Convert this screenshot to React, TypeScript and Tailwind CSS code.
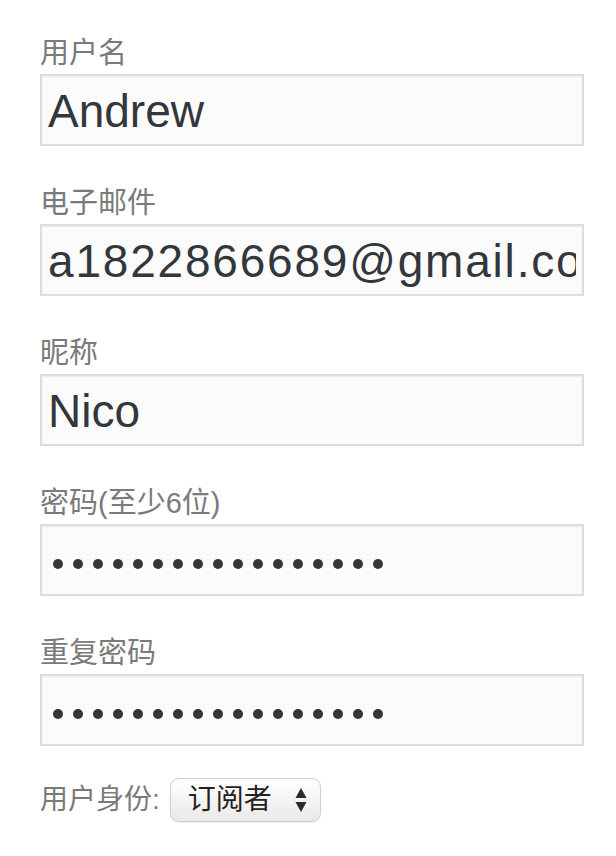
const font = { fontFamily: '"Liberation Sans", "Noto Sans CJK SC", sans-serif' };

const fields = [
  { label: '用户名', value: 'Andrew' },
  { label: '电子邮件', value: 'a1822866689@gmail.com', wide: true },
  { label: '昵称', value: 'Nico' },
  { label: '密码(至少6位)', password: true },
  { label: '重复密码', password: true },
];

function Dots() {
  return (
    <div className="flex h-[72px] w-full items-center gap-[10px] border-2 border-[#dddddd] bg-[#fbfbfb] pl-[11px] pt-[8px] shadow-[inset_0_1px_2px_rgba(0,0,0,0.07)]">
      {Array.from({ length: 17 }).map((_, i) => (
        <span key={i} className="h-[10px] w-[10px] rounded-full bg-[#32373c]" />
      ))}
    </div>
  );
}

export default function App() {
  return (
    <div className="min-h-[856px] bg-white pl-[40px] pr-[32px] pt-[37px]" style={font}>
      {fields.map((f) => (
        <div key={f.label} className="mb-[41px]">
          <label className="mb-[5px] block text-[29px] leading-[32px] text-[#7a7a7a]">{f.label}</label>
          {f.password ? (
            <Dots />
          ) : (
            <input
              readOnly
              value={f.value}
              className={`h-[72px] w-full border-2 border-[#dddddd] bg-[#fbfbfb] px-[6px] pt-[2px] text-[46px] text-[#32373c] shadow-[inset_0_1px_2px_rgba(0,0,0,0.07)] outline-none ${f.wide ? 'tracking-[1.8px]' : ''}`}
              style={font}
            />
          )}
        </div>
      ))}

      {/* Role */}
      <div className="-mt-[9px] flex items-center gap-[10px]">
        <span className="text-[28px] leading-[32px] text-[#7a7a7a]">用户身份:</span>
        <div className="flex h-[44px] w-[151px] items-center justify-between rounded-[9px] border border-[#cfcfcf] bg-gradient-to-b from-white via-[#f4f4f4] to-[#e9e9e9] pl-[17px] pr-[13px] shadow-[inset_0_1px_0_white,0_1px_1px_rgba(0,0,0,0.08)]">
          <span className="text-[28px] leading-none text-[#222]">订阅者</span>
          <svg width="12" height="26" viewBox="0 0 12 26">
            <path d="M6 1 L11.5 11 L0.5 11 Z" fill="#2a2a2a" />
            <path d="M0.5 15 L11.5 15 L6 25 Z" fill="#2a2a2a" />
          </svg>
        </div>
      </div>
    </div>
  );
}
